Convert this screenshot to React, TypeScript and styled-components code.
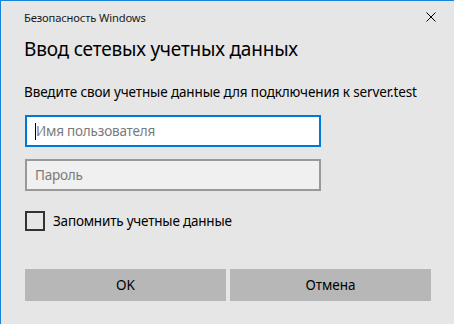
import { createGlobalStyle } from 'styled-components'
import styled from 'styled-components'

const Global = createGlobalStyle`
  html, body { margin: 0; padding: 0; background: #e6e6e6; }
  body { font-family: "Noto Sans", "Open Sans", sans-serif; }
`

/* ───── window ───── */

const Win = styled.div`
  width: 454px; height: 324px; box-sizing: border-box;
  background: #e6e6e6;
  border-top: 1px solid #1883d7;
  border-left: 1px solid #1883d7;
  display: flex; flex-direction: column;
  padding: 0 23px 0 24px;
  color: #000;
`

const TitleBar = styled.div`
  height: 32px; display: flex; align-items: center; justify-content: space-between;
  font-size: 11.2px; letter-spacing: -0.15px; color: #1a1a1a;
  margin-right: -23px; margin-left: -1px;
`

const CloseBtn = styled.div`
  width: 46px; height: 32px; display: flex; align-items: center; justify-content: center;
  svg { width: 10px; height: 10px; }
`

const Heading = styled.h1`
  margin: 0; margin-left: -1px; font-weight: 400; font-size: 19px; letter-spacing: -0.2px;
  line-height: 28px; margin-top: 2px;
`

const Desc = styled.p`
  margin: 0; margin-top: 19px; margin-left: -1px; font-size: 13.5px; letter-spacing: -0.12px;
  line-height: 20px; white-space: nowrap;
`

const Input = styled.div<{ $focus?: boolean }>`
  box-sizing: border-box; width: 296px; height: 32px;
  margin-top: ${({ $focus }) => ($focus ? '13px' : '12px')};
  display: flex; align-items: center; padding-left: 8px;
  font-size: 13.5px; letter-spacing: -0.2px; color: #7a7a7a;
  border: 2px solid ${({ $focus }) => ($focus ? '#0078d7' : '#999999')};
  background: ${({ $focus }) => ($focus ? '#ffffff' : '#f0f0f0')};
`

const Caret = styled.span`
  width: 1px; height: 17px; background: #000;
`

const CheckRow = styled.label`
  display: flex; align-items: center; gap: 8px;
  margin-top: 20px; font-size: 13.5px; letter-spacing: -0.2px;
`

const Box = styled.span`
  box-sizing: border-box; width: 20px; height: 20px;
  border: 2px solid #333333; background: transparent;
`

const Buttons = styled.div`
  margin-top: 38px; display: grid; grid-template-columns: 201px 201px; gap: 4px;
`

const Btn = styled.button`
  height: 32px; border: none; background: #b7b7b7; font-family: inherit;
  font-size: 13.5px; color: #000; padding: 0;
`

export default function App() {
  return (
    <>
      <Global />
      <Win>
        <TitleBar>
          <span>Безопасность Windows</span>
          <CloseBtn>
            <svg viewBox="0 0 10 10">
              <path d="M0.5 0.5 L9.5 9.5 M9.5 0.5 L0.5 9.5" stroke="#000" strokeWidth="1" fill="none" />
            </svg>
          </CloseBtn>
        </TitleBar>
        <Heading>Ввод сетевых учетных данных</Heading>
        <Desc>Введите свои учетные данные для подключения к server.test</Desc>
        <Input $focus>
          <Caret />Имя пользователя
        </Input>
        <Input>Пароль</Input>
        <CheckRow>
          <Box />
          Запомнить учетные данные
        </CheckRow>
        <Buttons>
          <Btn>OK</Btn>
          <Btn>Отмена</Btn>
        </Buttons>
      </Win>
    </>
  )
}
